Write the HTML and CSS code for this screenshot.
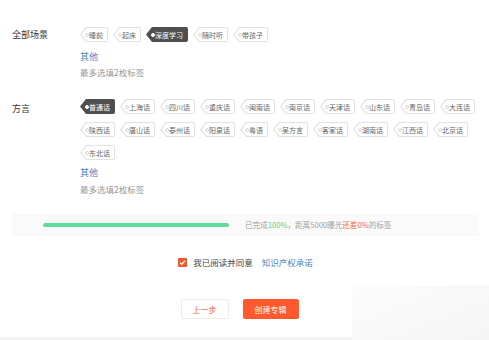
FILE: index.html
```html
<!doctype html>
<html>
<head>
  <title>创建专辑</title>
  <meta charset="utf-8"/>
  <link rel="stylesheet" href="styles.css">
</head>
<body>
  <div id="page">
    <div class="Field Field--scene">
      <div class="Field__Label">全部场景</div>
      <div class="Field__Body">
        <div class="Tags">
          <span class="Tag"><span>睡前</span></span>
          <span class="Tag"><span>起床</span></span>
          <span class="Tag Tag--on"><span>深度学习</span></span>
          <span class="Tag"><span>随时听</span></span>
          <span class="Tag"><span>带孩子</span></span>
        </div>
        <a class="Field__Other" href="#">其他</a>
        <p class="Field__Hint">最多选填2枚标签</p>
      </div>
    </div>

    <div class="Field Field--dialect">
      <div class="Field__Label">方言</div>
      <div class="Field__Body">
        <div class="Tags">
          <span class="Tag Tag--on"><span>普通话</span></span>
          <span class="Tag"><span>上海话</span></span>
          <span class="Tag"><span>四川话</span></span>
          <span class="Tag"><span>重庆话</span></span>
          <span class="Tag"><span>闽南话</span></span>
          <span class="Tag"><span>南京话</span></span>
          <span class="Tag"><span>天津话</span></span>
          <span class="Tag"><span>山东话</span></span>
          <span class="Tag"><span>青岛话</span></span>
          <span class="Tag"><span>大连话</span></span>
          <span class="Tag"><span>陕西话</span></span>
          <span class="Tag"><span>唐山话</span></span>
          <span class="Tag"><span>泰州话</span></span>
          <span class="Tag"><span>阳泉话</span></span>
          <span class="Tag"><span>粤语</span></span>
          <span class="Tag"><span>吴方言</span></span>
          <span class="Tag"><span>客家话</span></span>
          <span class="Tag"><span>湖南话</span></span>
          <span class="Tag"><span>江西话</span></span>
          <span class="Tag"><span>北京话</span></span>
          <span class="Tag"><span>东北话</span></span>
        </div>
        <a class="Field__Other" href="#">其他</a>
        <p class="Field__Hint">最多选填2枚标签</p>
      </div>
    </div>

    <div class="Progress">
      <div class="Progress__Bar"><div class="Progress__Fill" style="width:100%"></div></div>
      <p class="Progress__Text">已完成<span class="green">100%</span>，距离5000曝光<span class="red">还差0%</span>的标签</p>
    </div>

    <div class="Agree">
      <span class="Agree__Box">
        <svg width="7" height="7" viewBox="0 0 7 7"><path d="M1 3.6 L2.8 5.3 L6 1.6" fill="none" stroke="#fff" stroke-width="1.3"/></svg>
      </span>
      <span class="Agree__Text">我已阅读并同意</span>
      <a class="Agree__Link" href="#">知识产权承诺</a>
    </div>

    <div class="Actions">
      <button class="Button">上一步</button>
      <button class="Button Button--primary">创建专辑</button>
    </div>
  </div>
  <div class="Footer"></div>
  <div class="Corner"></div>
</body>
</html>
```

FILE: styles.css
```css
body {
  margin: 0;
  background-color: #fff;
  font-family: "Noto Sans CJK SC", "Noto Sans", sans-serif;
  color: #333;
  position: relative;
  height: 340px;
  overflow: hidden;
}

#page {
  padding: 27px 10px 0 12px;
}

.Field {
  display: grid;
  grid-template-columns: 68px 1fr;
}
.Field--dialect {
  margin-top: 21px;
}
.Field__Label {
  font-size: 9px;
  line-height: 15px;
  color: #333;
}
.Field--dialect .Field__Label {
  padding-top: 2px;
}
.Field__Other {
  display: block;
  margin-top: 8px;
  font-size: 9px;
  line-height: 14px;
  color: #3f7fc6;
  text-decoration: none;
}
.Field--dialect .Field__Other {
  margin-top: 6px;
}
.Field__Hint {
  margin: 2px 0 0;
  font-size: 8.5px;
  line-height: 12px;
  color: #999;
}
.Field--dialect .Field__Hint {
  margin-top: 3px;
}

.Tags {
  display: flex;
  flex-wrap: wrap;
  gap: 8px 5px;
}
.Tag {
  position: relative;
  display: inline-flex;
  align-items: center;
  box-sizing: border-box;
  height: 15px;
  padding: 0 5px 0 9px;
  font-size: 7px;
  color: #666;
  background-color: #e2e2e2;
  border-radius: 2px;
  clip-path: polygon(6px 0, 100% 0, 100% 100%, 6px 100%, 0 50%);
}
.Tag::before {
  content: "";
  position: absolute;
  top: 1px;
  right: 1px;
  bottom: 1px;
  left: 1.4px;
  background-color: #fff;
  border-radius: 1px;
  clip-path: polygon(5.4px 0, 100% 0, 100% 100%, 5.4px 100%, 0 50%);
}
.Tag::after {
  content: "";
  position: absolute;
  left: 4.5px;
  top: 6px;
  width: 2px;
  height: 2px;
  border: 0.6px solid #d6d6d6;
  border-radius: 50%;
}
.Tag span {
  position: relative;
  white-space: nowrap;
}
.Tag--on {
  color: #fff;
  background-color: #4f4f4f;
}
.Tag--on::before {
  display: none;
}
.Tag--on::after {
  background-color: #fff;
  border-color: #fff;
}

.Progress {
  display: flex;
  align-items: center;
  margin-top: 18px;
  height: 23px;
  padding-left: 31px;
  background-color: #fafafa;
}
.Progress__Bar {
  width: 186px;
  height: 4px;
  border-radius: 2px;
  background-color: #eee;
}
.Progress__Fill {
  height: 100%;
  border-radius: 2px;
  background-color: #62da9c;
}
.Progress__Text {
  margin: 0 0 0 16px;
  font-size: 7.6px;
  color: #a3a3a3;
}
.Progress__Text .green {
  color: #52cf8d;
}
.Progress__Text .red {
  color: #f5694a;
}

.Agree {
  display: flex;
  align-items: center;
  justify-content: center;
  margin-top: 19px;
  line-height: 14px;
  font-size: 8.5px;
}
.Agree__Box {
  display: inline-flex;
  align-items: center;
  justify-content: center;
  width: 9px;
  height: 9px;
  border-radius: 1px;
  background-color: #f2572b;
  margin-right: 6px;
}
.Agree__Text {
  color: #444;
}
.Agree__Link {
  margin-left: 9px;
  color: #4a86c8;
  text-decoration: none;
}

.Actions {
  display: flex;
  justify-content: center;
  gap: 14px;
  margin-top: 30px;
  padding-right: 12px;
}
.Button {
  box-sizing: border-box;
  width: 48px;
  height: 20px;
  padding: 0;
  border: 1px solid #ececec;
  border-radius: 2px;
  background-color: #fff;
  color: #f35b3f;
  font-family: inherit;
  font-size: 8px;
  cursor: pointer;
}
.Button--primary {
  width: 56px;
  border-color: #ff5a2e;
  background-color: #ff5a2e;
  color: #fff;
}

.Footer {
  position: absolute;
  left: 0;
  right: 0;
  bottom: 0;
  height: 3px;
  background-color: #f2f2f2;
}
.Corner {
  position: absolute;
  right: 0;
  bottom: 0;
  width: 137px;
  height: 55px;
  background: linear-gradient(to bottom right, #fcfcfc, #f5f5f5);
}
```
